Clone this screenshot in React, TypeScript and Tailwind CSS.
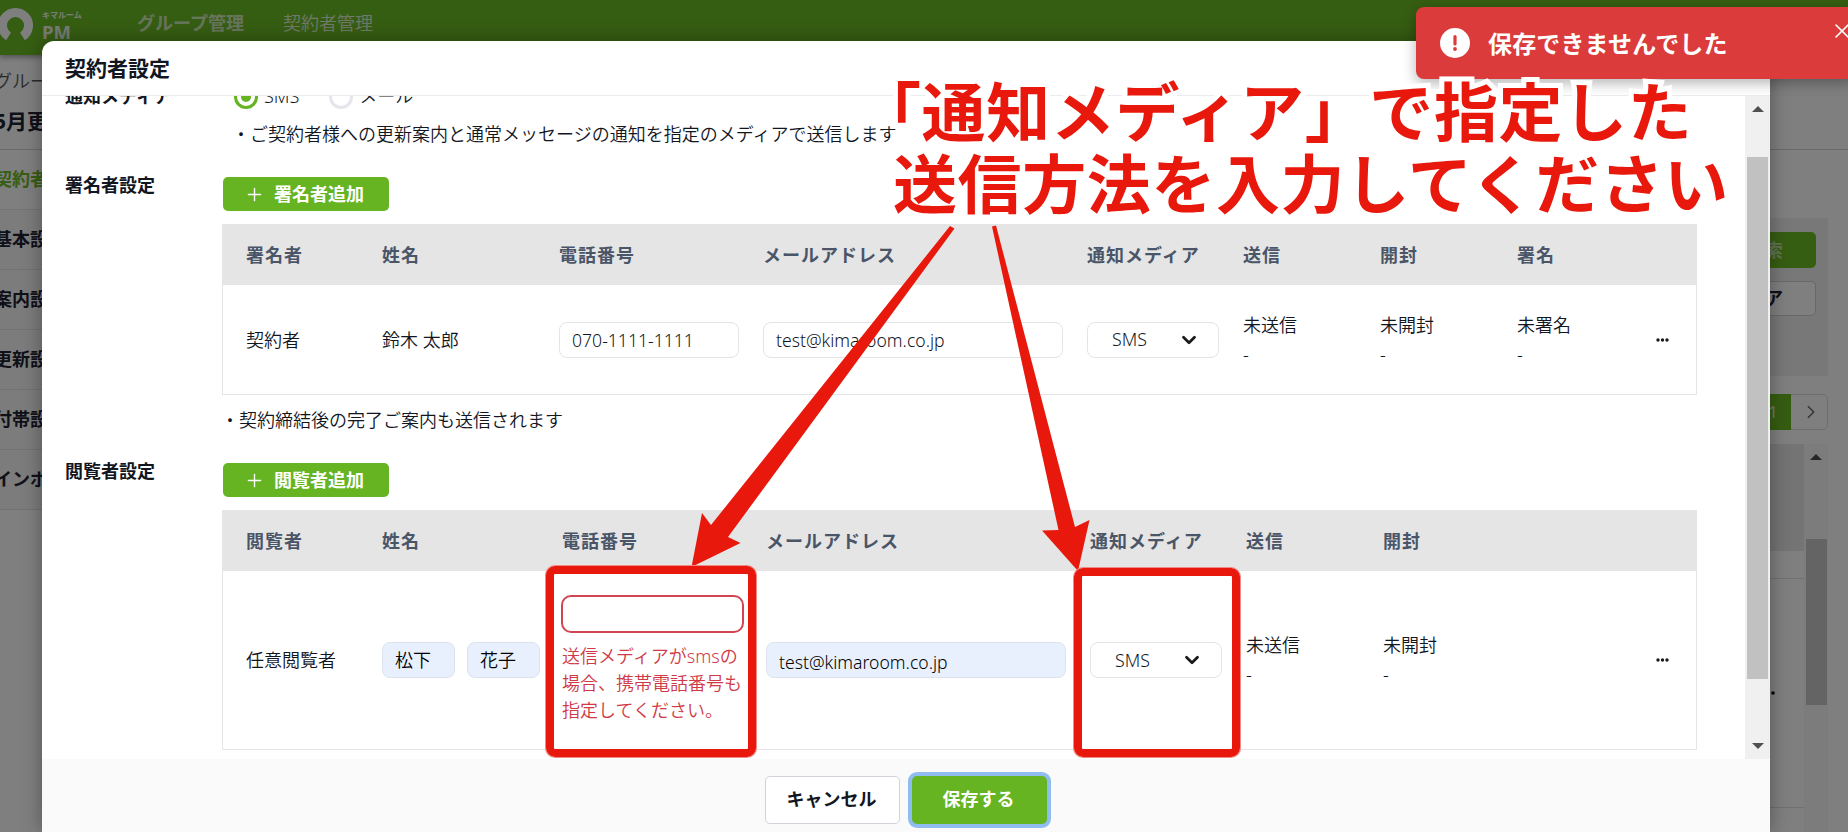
import { ChevronDown, ChevronRight, Plus, X } from 'lucide-react';
import type { ReactNode } from 'react';

const sideMenu = ['基本設定', '案内設定', '更新設定', '付帯設定', 'インボイス'];

function Header() {
  return (
    <header className="relative flex h-[55px] shrink-0 items-center bg-[#6cbc24] pb-[9px] text-[18px] shadow-[0_2px_6px_rgba(0,0,0,0.4)]">
      <svg className="-ml-[2px] mt-[4px] h-[36px] w-[36px]" viewBox="0 0 36 36" fill="none">
        <path d="M10.5 29.5 A13 13 0 1 1 24.5 29.5" stroke="#fff" strokeWidth="9" />
      </svg>
      <div className="ml-[8px] flex w-[95px] flex-col pt-[4px] font-bold text-white/90">
        <span className="text-[8px] leading-[12px]">キマルーム</span>
        <span className="text-[18.5px] leading-[21px]">PM</span>
      </div>
      <span className="font-bold text-white/70">グループ管理</span>
      <span className="ml-[39px] font-[350] text-white/80">契約者管理</span>
    </header>
  );
}

function Sidebar() {
  return (
    <nav className="-ml-[6px] w-[300px] text-[18px] font-bold text-[#1f2233]">
      <div className="h-[52px] pt-[12px] leading-[28px] font-[350] text-[#555]">グループ一覧</div>
      <div className="h-[43px] border-b border-[#d4d4d4] text-[21px] leading-[28px]">5月更新</div>
      <div className="h-[60px] border-b border-[#e8e8e8] leading-[58px] text-[#6cbc24]">契約者一覧</div>
      {sideMenu.map((item) => (
        <div key={item} className="h-[60px] border-b border-[#e4e4e4] bg-[#f8f8f8] leading-[58px]">
          {item}
        </div>
      ))}
    </nav>
  );
}

function SearchSide() {
  return (
    <div className="mt-[94px] flex flex-1 flex-col items-end border-t border-[#d4d4d4] pr-5">
      <div className="mt-[68px] flex h-[158px] w-[400px] flex-col items-end gap-[13px] bg-[#f0f0f0] pt-[14px] pr-[12px] text-[18px] font-bold">
        <div className="flex h-[36px] w-[110px] items-center justify-end rounded-[5px] bg-[#6cbc24] pr-[33px] text-white/60">検索</div>
        <div className="flex h-[35px] w-[110px] items-center justify-end rounded-[5px] border border-[#d0d0d0] bg-white pr-[32px] text-[#1f2233]">クリア</div>
      </div>
      <div className="mt-[18px] flex h-[36px] rounded-r-[5px] border border-[#dcdcdc] text-[17px]">
        <span className="-my-px flex w-[36px] items-center justify-center bg-[#6cbc24] text-white/80">1</span>
        <span className="flex w-[36px] items-center justify-center text-[#666]">
          <ChevronRight size={22} strokeWidth={1.6} className="ml-1" />
        </span>
      </div>
      <div className="mt-[14px] flex h-[400px] w-[200px]">
        <div className="flex-1">
          <div className="h-[107px] bg-[#e8e8e8]" />
          <div className="h-[28px] border-b border-[#e0e0e0]" />
          <div className="flex h-[229px] items-center justify-end border-b border-[#e0e0e0] pr-[29px]">
            <svg width="14" height="4" viewBox="0 0 14 4">
              <circle cx="2" cy="2" r="1.8" />
              <circle cx="7" cy="2" r="1.8" />
              <circle cx="12" cy="2" r="1.8" />
            </svg>
          </div>
        </div>
        <div className="flex w-[24px] flex-col items-center bg-[#f8f8f8]">
          <svg className="mt-[10px]" width="12" height="6" viewBox="0 0 12 6">
            <path d="M0 6 L6 0 L12 6 Z" fill="#505050" />
          </svg>
          <div className="mt-[79px] h-[166px] w-[21px] bg-[#c8c8c8]" />
        </div>
      </div>
    </div>
  );
}

function Radio({ label, checked }: { label: string; checked?: boolean }) {
  return (
    <span className="flex items-center gap-[6px]">
      {checked ? (
        <span className="flex h-6 w-6 items-center justify-center rounded-full border-[3px] border-[#66b422]">
          <span className="h-[10px] w-[10px] rounded-full bg-[#66b422]" />
        </span>
      ) : (
        <span className="h-6 w-6 rounded-full border-[3px] border-[#e4e6ec]" />
      )}
      {label}
    </span>
  );
}

function AddButton({ children }: { children: ReactNode }) {
  return (
    <button className="ml-[1px] flex h-[34px] w-[166px] items-center rounded-[5px] bg-[#66b422] pl-[21px] font-bold text-white">
      <Plus size={21} strokeWidth={1.6} />
      <span className="ml-[9px]">{children}</span>
    </button>
  );
}

function TextInput({ value, className }: { value: string; className: string }) {
  return (
    <div className={`flex h-[36px] items-center rounded-[8px] border px-[12px] ${className}`}>
      {value}
    </div>
  );
}

function MediaSelect() {
  return (
    <div className="flex h-[36px] w-[132px] items-center rounded-[8px] border border-[#e4e4e6] pl-[24px]">
      <span className="w-[66px] text-[17.8px]">SMS</span>
      <ChevronDown size={22} strokeWidth={3} className="text-[#1a1a1a]" />
    </div>
  );
}

function Status({ label }: { label: string }) {
  return (
    <div className="leading-[29px]">
      {label}
      <br />-
    </div>
  );
}

function Dots() {
  return (
    <div className="flex justify-end pr-[27px]">
      <svg width="13" height="4" viewBox="0 0 13 4" fill="#1a1a1a">
        <circle cx="2" cy="2" r="1.7" />
        <circle cx="6.5" cy="2" r="1.7" />
        <circle cx="11" cy="2" r="1.7" />
      </svg>
    </div>
  );
}

const signerCols = 'grid grid-cols-[136px_177px_204px_324px_156px_137px_137px_1fr] items-center pl-[23px]';
const viewerCols = 'grid grid-cols-[136px_180px_204px_324px_156px_137px_1fr] items-center pl-[23px]';
const headRow = 'h-[61px] bg-[#e5e5e5] pt-[2px] font-bold tracking-[1px] text-[#4a5568]';

function SignerTable() {
  return (
    <div className="mt-[13px] w-[1475px] border border-t-0 border-[#e5e5e5]">
      <div className={`${signerCols} ${headRow}`}>
        <span>署名者</span>
        <span>姓名</span>
        <span>電話番号</span>
        <span>メールアドレス</span>
        <span>通知メディア</span>
        <span>送信</span>
        <span>開封</span>
        <span>署名</span>
      </div>
      <div className={`${signerCols} h-[109px]`}>
        <span className="pt-[1px]">契約者</span>
        <span className="pt-[1px]">鈴木 太郎</span>
        <TextInput value="070-1111-1111" className="w-[180px] border-[#e4e4e6] pt-[2px] text-[17.6px]" />
        <TextInput value="test@kimaroom.co.jp" className="w-[300px] border-[#e4e4e6] pt-[2px] text-[17.6px]" />
        <MediaSelect />
        <Status label="未送信" />
        <Status label="未開封" />
        <div className="flex items-center justify-between">
          <Status label="未署名" />
          <Dots />
        </div>
      </div>
    </div>
  );
}

function ViewerTable() {
  return (
    <div className="mt-[13px] w-[1475px] border border-t-0 border-[#e5e5e5]">
      <div className={`${viewerCols} ${headRow}`}>
        <span>閲覧者</span>
        <span>姓名</span>
        <span>電話番号</span>
        <span>メールアドレス</span>
        <span>通知メディア</span>
        <span>送信</span>
        <span>開封</span>
      </div>
      <div className={`${viewerCols} h-[178px]`}>
        <span className="pt-[1px]">任意閲覧者</span>
        <div className="flex gap-[12px] text-black">
          <TextInput value="松下" className="w-[73px] border-[#dbe2ee] bg-[#e8f0fe]" />
          <TextInput value="花子" className="w-[73px] border-[#dbe2ee] bg-[#e8f0fe]" />
        </div>
        <div className="w-[182px] pb-[2px]">
          <div className="-ml-[1px] h-[38px] w-[183px] rounded-[10px] border-2 border-[#d14552]" />
          <p className="mt-[10px] leading-[27px] whitespace-nowrap text-[#d03a46]">
            送信メディアがsmsの
            <br />
            場合、携帯電話番号も
            <br />
            指定してください。
          </p>
        </div>
        <TextInput value="test@kimaroom.co.jp" className="w-[300px] border-[#dbe2ee] bg-[#e8f0fe] pt-[4px] text-[17.6px] text-black" />
        <MediaSelect />
        <Status label="未送信" />
        <div className="flex items-center justify-between">
          <Status label="未開封" />
          <Dots />
        </div>
      </div>
    </div>
  );
}

function Modal() {
  return (
    <section className="absolute top-[41px] left-[42px] flex h-[791px] w-[1728px] flex-col overflow-hidden rounded-t-[12px] bg-white text-[18px] font-[350] text-[#12161f] shadow-[0_0_20px_rgba(0,0,0,0.35)]">
      <h1 className="h-[55px] shrink-0 border-b border-[#ececee] pl-[23px] text-[21px] leading-[54px] font-bold">契約者設定</h1>
      <div className="flex h-[663px]">
        <div className="flex-1 overflow-hidden pl-[23px]">
          <div className="-mt-[13px] flex leading-[27px]">
            <div className="w-[157px] font-bold">通知メディア</div>
            <div>
              <div className="flex gap-[30px] pl-[12px]">
                <Radio label="SMS" checked />
                <Radio label="メール" />
              </div>
              <p className="mt-[11px] mb-[-1px] pl-[10px]">・ご契約者様への更新案内と通常メッセージの通知を指定のメディアで送信します</p>
            </div>
          </div>
          <div className="mt-[30px] flex">
            <div className="w-[157px] leading-[17px] font-bold">署名者設定</div>
            <div>
              <AddButton>署名者追加</AddButton>
              <SignerTable />
              <p className="-ml-[1px] mt-[12px] leading-[27px]">・契約締結後の完了ご案内も送信されます</p>
            </div>
          </div>
          <div className="mt-[29px] flex">
            <div className="w-[157px] leading-[17px] font-bold">閲覧者設定</div>
            <div>
              <AddButton>閲覧者追加</AddButton>
              <ViewerTable />
            </div>
          </div>
        </div>
        <div className="flex w-[25px] flex-col items-center bg-[#f0f0f0]">
          <svg className="mt-[10px]" width="12" height="6" viewBox="0 0 12 6">
            <path d="M0 6 L6 0 L12 6 Z" fill="#505050" />
          </svg>
          <div className="mt-[45px] h-[522px] w-[21px] bg-[#c1c1c1]" />
          <svg className="mt-[64px]" width="12" height="6" viewBox="0 0 12 6">
            <path d="M0 0 L6 6 L12 0 Z" fill="#505050" />
          </svg>
        </div>
      </div>
      <footer className="flex flex-1 gap-[12px] bg-[#fafafa] pt-[17px] pl-[723px] font-bold">
        <button className="h-[48px] w-[135px] rounded-[5px] border border-[#d0d3da] bg-white pr-[2px] pb-[1px]">キャンセル</button>
        <button className="h-[48px] w-[135px] rounded-[5px] bg-[#66b422] pr-[2px] pb-[1px] text-white ring-4 ring-[#90bdf0]">保存する</button>
      </footer>
    </section>
  );
}

function Toast() {
  return (
    <div className="absolute top-[7px] left-[1416px] flex h-[72px] w-[440px] items-center rounded-[8px] bg-[#dc3b3b] pl-[24px] text-white shadow-[0_4px_14px_rgba(0,0,0,0.3)]">
      <svg width="30" height="30" viewBox="0 0 30 30">
        <circle cx="15" cy="15" r="15" fill="#fff" />
        <path d="M15 8.5 V16" stroke="#dc3b3b" strokeWidth="3.2" strokeLinecap="round" />
        <circle cx="15" cy="21" r="1.9" fill="#dc3b3b" />
      </svg>
      <span className="ml-[18px] w-[343px] pt-[2px] text-[24px] font-bold tracking-[0.15px]">保存できませんでした</span>
      <X size={24} strokeWidth={1.6} className="mb-[24px] -ml-[1px] shrink-0" />
    </div>
  );
}

function Annotations() {
  return (
    <div className="pointer-events-none">
      <p className="absolute top-[76px] left-[893px] text-[64px] leading-[72px] font-bold tracking-[0.6px] whitespace-nowrap text-[#e8190c] [-webkit-text-stroke:10px_white] [paint-order:stroke_fill]">
        <span className="-ml-[36px]">「通知メディア」で指定した</span>
        <br />
        送信方法を入力してください
      </p>
      <svg className="absolute top-0 left-0" width="1848" height="832" fill="#e8190c">
        <path d="M950 226 L954.5 228.5 L728 537 L740.5 543 L691.5 567 L702 513 L711 525 Z" />
        <path d="M992 226.5 L996 225.5 L1075 527 L1089.5 520 L1078 571 L1042 530.5 L1058.5 530 Z" />
      </svg>
      <div className="absolute top-[566px] left-[546px] h-[191px] w-[210px] rounded-[9px] border-[8px] border-[#e8190c] shadow-[0_0_0_1px_#f08a84]" />
      <div className="absolute top-[568px] left-[1074px] h-[189px] w-[166px] rounded-[9px] border-[8px] border-[#e8190c] shadow-[0_0_0_1px_#f08a84]" />
    </div>
  );
}

export default function App() {
  return (
    <div className="relative h-[832px] w-[1848px] overflow-hidden bg-white font-['Noto_Sans','Noto_Sans_CJK_JP',sans-serif]">
      <div className="flex h-full flex-col">
        <Header />
        <div className="flex flex-1">
          <Sidebar />
          <SearchSide />
        </div>
      </div>
      <div className="absolute inset-0 bg-black/50" />
      <Modal />
      <Toast />
      <Annotations />
    </div>
  );
}
